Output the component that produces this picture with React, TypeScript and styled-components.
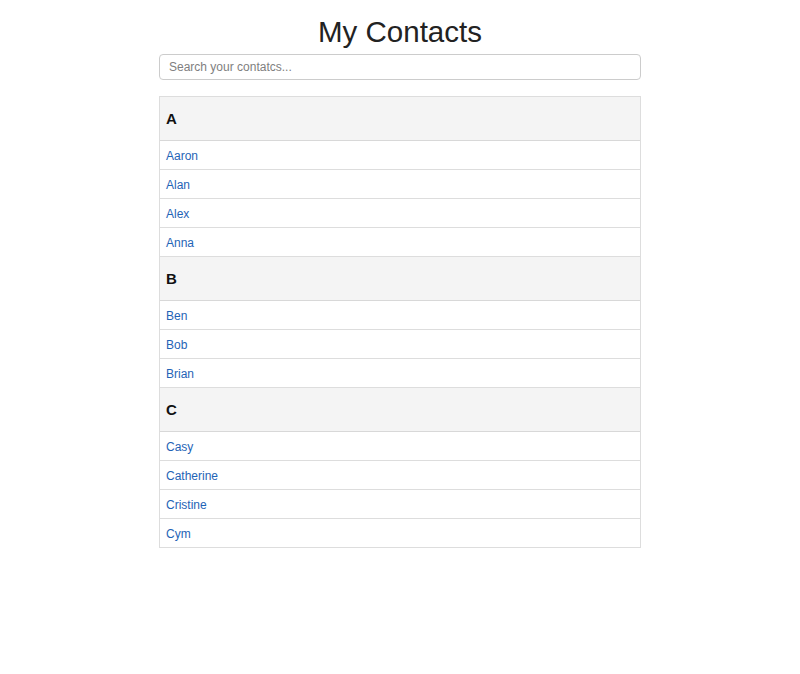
import React from "react";
import styled, { createGlobalStyle } from "styled-components";

const GlobalStyle = createGlobalStyle`
  html, body {
    margin: 0;
    padding: 0;
    background: #ffffff;
    font-family: "Liberation Sans", Arial, Helvetica, sans-serif;
    color: #222;
  }
  * { box-sizing: border-box; }
`;

const Page = styled.div`
  width: 482px;
  margin: 0 auto;
  padding-top: 15px;
`;

const Title = styled.h1`
  margin: 0 0 6px;
  font-size: 29.5px;
  line-height: 33px;
  font-weight: normal;
  text-align: center;
  color: #222;
`;

const SearchInput = styled.input`
  display: block;
  width: 100%;
  height: 26px;
  margin: 0 0 16px;
  padding: 0 9px;
  border: 1px solid #cccccc;
  border-radius: 4px;
  font-family: "Liberation Sans", Arial, sans-serif;
  font-size: 12px;
  color: #333;
  outline: none;
  &::placeholder {
    color: #808080;
  }
`;

const List = styled.div`
  border: 1px solid #dddddd;
  border-bottom: none;
`;

const GroupHeader = styled.div`
  height: 44px;
  display: flex;
  align-items: center;
  padding: 0 6px;
  background: #f4f4f4;
  border-bottom: 1px solid #d8d8d8;
  font-size: 15px;
  font-weight: bold;
  color: #111;
`;

const Row = styled.a`
  display: flex;
  align-items: center;
  height: 29px;
  padding: 1px 6px 0;
  border-bottom: 1px solid #dddddd;
  font-size: 12px;
  color: #1f64b6;
  text-decoration: none;
`;

const groups: { letter: string; names: string[] }[] = [
  { letter: "A", names: ["Aaron", "Alan", "Alex", "Anna"] },
  { letter: "B", names: ["Ben", "Bob", "Brian"] },
  { letter: "C", names: ["Casy", "Catherine", "Cristine", "Cym"] },
];

export default function App() {
  return (
    <>
      <GlobalStyle />
      <Page>
        <Title>My Contacts</Title>
        <SearchInput placeholder="Search your contatcs..." />
        <List>
          {groups.map((g) => (
            <React.Fragment key={g.letter}>
              <GroupHeader>{g.letter}</GroupHeader>
              {g.names.map((n) => (
                <Row key={n} href="#">
                  {n}
                </Row>
              ))}
            </React.Fragment>
          ))}
        </List>
      </Page>
    </>
  );
}
